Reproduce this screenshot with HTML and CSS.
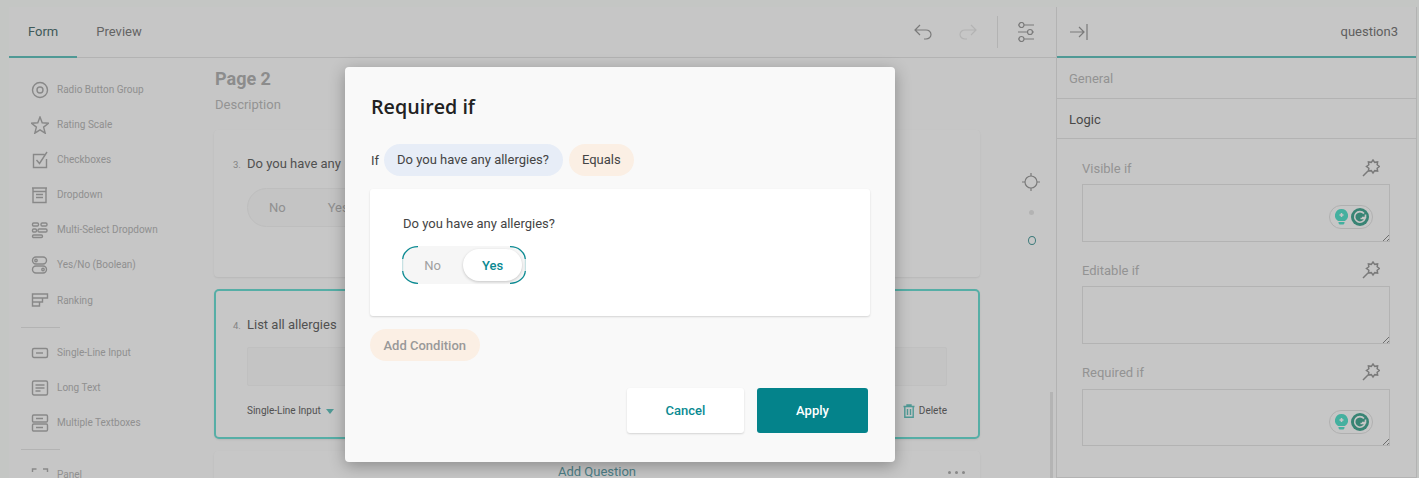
FILE: index.html
```html
<!DOCTYPE html>
<html lang="en">
<head>
    <meta charset="UTF-8">
    <meta name="viewport" content="width=device-width, initial-scale=1.0">
    <title>Form Builder</title>
    <link rel="stylesheet" href="styles.css">
</head>
<body>
    <div class="app">
        <div class="builder">
            <div class="topbar">
                <div class="tab active">Form</div>
                <div class="tab">Preview</div>
                <div class="tools">
                    <svg class="tool" width="20" height="18" viewBox="0 0 20 18"><path d="M7 2 2 7l5 5M2 7h11a5 4.500 0 0 1 0 9h-2"/></svg>
                    <svg class="tool faint" width="20" height="18" viewBox="0 0 20 18"><path d="M13 2l5 5-5 5M18 7H7a5 4.500 0 0 0 0 9h2"/></svg>
                    <span class="tool-sep"></span>
                    <svg class="tool" width="18" height="20" viewBox="0 0 18 20"><path d="M7 3h10M1 3h1M1 10h10M15 10h2M7 17h10M1 17h1"/><circle cx="4.500" cy="3" r="2.500"/><circle cx="13" cy="10" r="2.500"/><circle cx="4.500" cy="17" r="2.500"/></svg>
                </div>
            </div>
            <div class="workspace">
                <div class="toolbox">
                    <div class="tool-item"><svg width="18" height="18" viewBox="0 0 18 18"><circle cx="9" cy="9" r="7.500"/><circle cx="9" cy="9" r="3"/></svg>Radio Button Group</div>
                    <div class="tool-item"><svg width="18" height="18" viewBox="0 0 18 18"><path d="M9 1l2.200 5.800 6.300.4-4.900 3.900 1.600 6.100L9 13.800l-5.200 3.400 1.600-6.100L.500 7.200l6.300-.4z"/></svg>Rating Scale</div>
                    <div class="tool-item"><svg width="18" height="18" viewBox="0 0 18 18"><path d="M15.500 8v8.500h-13v-13h11M5.500 9l3 3.500L16 1"/></svg>Checkboxes</div>
                    <div class="tool-item"><svg width="18" height="18" viewBox="0 0 18 18"><path d="M1 2h15M2 2v14.500h13V2M1.500 5.500h14M5 8.500h7M5 11.500h7"/></svg>Dropdown</div>
                    <div class="tool-item"><svg width="18" height="18" viewBox="0 0 18 18"><rect x="1.500" y="2" width="6" height="3" rx="1.200"/><rect x="10" y="2" width="6" height="3" rx="1.200"/><rect x="1.500" y="8" width="4" height="3" rx="1.200"/><rect x="7" y="8" width="9" height="3" rx="1.200"/><rect x="1.500" y="14" width="10" height="2.500" rx="1.200"/></svg>Multi-Select Dropdown</div>
                    <div class="tool-item"><svg width="18" height="18" viewBox="0 0 18 18"><rect x="1.500" y="1" width="14" height="7" rx="3.500"/><rect x="1.500" y="10" width="14" height="7" rx="3.500"/><circle cx="5" cy="4.500" r="1.200"/><circle cx="12" cy="13.500" r="1.200"/></svg>Yes/No (Boolean)</div>
                    <div class="tool-item ranking"><svg width="18" height="18" viewBox="0 0 18 18"><path d="M1.500 2h15v4h-15zM1.500 6h10v4h-10zM1.500 10h7v4h-7z"/></svg>Ranking</div>
                    <div class="tool-sep-line"></div>
                    <div class="tool-item"><svg width="18" height="18" viewBox="0 0 18 18"><rect x="1.500" y="4.500" width="15" height="9" rx="1.500"/><path d="M5 9h7"/></svg>Single-Line Input</div>
                    <div class="tool-item"><svg width="18" height="18" viewBox="0 0 18 18"><rect x="1.500" y="2" width="15" height="14" rx="1.500"/><path d="M4.500 6h9M4.500 9h9M4.500 12h5"/></svg>Long Text</div>
                    <div class="tool-item"><svg width="18" height="18" viewBox="0 0 18 18"><rect x="1.500" y="1" width="15" height="7" rx="1.200"/><rect x="1.500" y="10" width="15" height="7" rx="1.200"/><path d="M5 4.500h7M5 13.500h7"/></svg>Multiple Textboxes</div>
                    <div class="tool-sep-line"></div>
                    <div class="tool-item"><svg width="18" height="18" viewBox="0 0 18 18"><path d="M1.500 6V3h4M12 3h4.500v3M1.500 12v3h4M12 15h4.500v-3"/></svg>Panel</div>
                </div>
                <div class="canvas">
                    <div class="page-title">Page 2</div>
                    <div class="page-desc">Description</div>
                    <div class="card card-q3">
                        <div class="q-title"><span class="q-num">3.</span>Do you have any</div>
                        <div class="bool"><span>No</span><span>Yes</span></div>
                    </div>
                    <div class="card card-q4">
                        <div class="q-title"><span class="q-num">4.</span>List all allergies</div>
                        <div class="q-input"></div>
                        <div class="q-foot">
                            <span>Single-Line Input</span><span class="caret"></span>
                            <span class="q-delete">
                                <svg width="12" height="14" viewBox="0 0 12 14"><path d="M.500 2.500h11M4 2.500V1h4v1.500M1.800 2.500v10.800h8.400V2.500M4.500 5v6M7.500 5v6"/></svg>Delete
                            </span>
                        </div>
                    </div>
                    <div class="card card-add">
                        <span class="add-question">Add Question</span>
                        <span class="more"><i></i><i></i><i></i></span>
                    </div>
                </div>
                <div class="rail">
                    <svg class="rail-target" width="18" height="18" viewBox="0 0 18 18"><circle cx="9" cy="9" r="6"/><path d="M9 0v3M9 15v3M0 9h3M15 9h3"/></svg>
                    <span class="rail-dot"></span>
                    <span class="rail-ring"></span>
                    <span class="scroll-thumb"></span>
                </div>
            </div>
        </div>
        <div class="props">
            <div class="props-head">
                <svg class="tool" width="18" height="20" viewBox="0 0 18 20"><path d="M0 10h14M9 5l5 5-5 5M17 2v16"/></svg>
                <span>question3</span>
            </div>
            <div class="props-row">General</div>
            <div class="props-row current">Logic</div>
            <div class="props-body">
                <div class="field-head"><span>Visible if</span><svg class="wand" width="18" height="18" viewBox="0 0 18 18"><path d="M1 17l5-5M17.500 7.500l-2.340 1.720.44 2.880-2.880-.44L11 14l-1.720-2.340-2.880.44.44-2.880L4.500 7.500l2.340-1.720-.44-2.880 2.880.44L11 1l1.720 2.340 2.880-.44-.44 2.880z"/></svg></div>
                <div class="field-box">
                    <div class="grammarly"><svg width="13" height="16" viewBox="0 0 13 16"><path class="bulb" d="M6.500 0a6.500 6.500 0 0 1 3.500 12H3A6.500 6.500 0 0 1 6.500 0zM3.500 13h6v1.200l-1 1.300h-4l-1-1.300z"/><path class="bulb-plus" d="M6.500 4v4M4.500 6h4"/></svg><svg class="g-badge" width="18" height="18" viewBox="0 0 18 18"><circle class="g-disc" cx="9" cy="9" r="9"/><path class="g-arc" d="M13 5.500A5.300 5.300 0 1 0 14 10.500H9.500M11 9.500h3.500v-3"/></svg></div>
                    <span class="grip"></span>
                </div>
                <div class="field-head"><span>Editable if</span><svg class="wand" width="18" height="18" viewBox="0 0 18 18"><path d="M1 17l5-5M17.500 7.500l-2.340 1.720.44 2.880-2.880-.44L11 14l-1.720-2.340-2.880.44.44-2.880L4.500 7.500l2.340-1.720-.44-2.880 2.880.44L11 1l1.720 2.340 2.880-.44-.44 2.880z"/></svg></div>
                <div class="field-box"><span class="grip"></span></div>
                <div class="field-head last"><span>Required if</span><svg class="wand" width="18" height="18" viewBox="0 0 18 18"><path d="M1 17l5-5M17.500 7.500l-2.340 1.720.44 2.880-2.880-.44L11 14l-1.720-2.340-2.880.44.44-2.880L4.500 7.500l2.340-1.720-.44-2.880 2.880.44L11 1l1.720 2.340 2.880-.44-.44 2.880z"/></svg></div>
                <div class="field-box">
                    <div class="grammarly"><svg width="13" height="16" viewBox="0 0 13 16"><path class="bulb" d="M6.500 0a6.500 6.500 0 0 1 3.500 12H3A6.500 6.500 0 0 1 6.500 0zM3.500 13h6v1.200l-1 1.300h-4l-1-1.300z"/><path class="bulb-plus" d="M6.500 4v4M4.500 6h4"/></svg><svg class="g-badge" width="18" height="18" viewBox="0 0 18 18"><circle class="g-disc" cx="9" cy="9" r="9"/><path class="g-arc" d="M13 5.500A5.300 5.300 0 1 0 14 10.500H9.500M11 9.500h3.500v-3"/></svg></div>
                    <span class="grip"></span>
                </div>
            </div>
        </div>
    </div>

    <!-- Dialog over the dimmed builder -->
    <div class="overlay">
        <div class="modal">
            <h2>Required if</h2>
            <div class="rule">
                <span class="rule-if">If</span>
                <span class="pill pill-blue">Do you have any allergies?</span>
                <span class="pill pill-peach">Equals</span>
            </div>
            <div class="value-card">
                <div class="value-title">Do you have any allergies?</div>
                <div class="value-toggle">
                    <svg class="toggle-arcs" width="124" height="38" viewBox="0 0 124 38"><path class="arc-side" d="M.700 13v12M123.300 13v12"/><path d="M16 .700A15 13 0 0 0 .700 13M.700 25A15 13 0 0 0 16 37.300M108 .700A15 13 0 0 1 123.300 13M123.300 25A15 13 0 0 1 108 37.300"/></svg>
                    <span class="opt">No</span>
                    <span class="opt on">Yes</span>
                </div>
            </div>
            <div class="add-cond"><span class="pill pill-peach muted">Add Condition</span></div>
            <div class="modal-foot">
                <button class="btn btn-cancel">Cancel</button>
                <button class="btn btn-apply">Apply</button>
            </div>
        </div>
    </div>
</body>
</html>
```

FILE: styles.css
```css
* {
    box-sizing: border-box;
}

html, body {
    height: 100%;
}

body {
    margin: 0;
    overflow: hidden;
    background-color: #f5f8f6;
    font-family: 'Roboto', 'Liberation Sans', sans-serif;
    color: #333;
    padding: 7px 2px 0 9px;
}

svg {
    fill: none;
    stroke: #777;
    stroke-width: 1.200;
    flex-shrink: 0;
}

.app {
    display: flex;
    height: 471px;
    background-color: #f8f8f8;
}

.builder {
    width: 1047px;
    display: flex;
    flex-direction: column;
    flex-shrink: 0;
}

/* top tabs */
.topbar {
    height: 51px;
    display: flex;
    border-bottom: 1px solid #e0e0e0;
    flex-shrink: 0;
}

.tab {
    padding: 0 19px;
    height: 51px;
    line-height: 50px;
    font-size: 13px;
    color: #7d7d7d;
}

.tab.active {
    color: #4f7070;
    border-bottom: 2px solid #63c0bb;
}

.tools {
    margin-left: auto;
    display: flex;
    align-items: center;
    padding-right: 21px;
}

.tool {
    stroke: #999;
}

.tool.faint {
    stroke: #e0e0e0;
    margin-left: 25px;
}

.tool-sep {
    width: 1px;
    height: 32px;
    background-color: #e0e0e0;
    margin: 0 19px;
}

.workspace {
    flex: 1;
    display: flex;
    min-height: 0;
}

/* left toolbox */
.toolbox {
    width: 205px;
    flex-shrink: 0;
    padding: 14px 0 0 12px;
}

.tool-item {
    height: 35px;
    display: flex;
    align-items: center;
    gap: 8px;
    font-size: 10px;
    color: #b4b4b4;
    padding-left: 10px;
}

.tool-item svg {
    stroke: #aaa;
    stroke-width: 1.400;
}

.tool-item.ranking {
    margin-top: 1px;
}

.tool-sep-line {
    width: 39px;
    height: 1px;
    background-color: #e0e0e0;
    margin: 9px 0 7px;
}

/* canvas */
.canvas {
    width: 766px;
    flex-shrink: 0;
}

.page-title {
    font-size: 18px;
    font-weight: 700;
    color: #b0b0b0;
    line-height: 21px;
    margin: 10px 0 0 1px;
}

.page-desc {
    font-size: 13px;
    color: #b8b8b8;
    line-height: 16px;
    margin: 8px 0 17px 1px;
}

.card {
    background-color: #f9f9f9;
    border-radius: 4px;
    box-shadow: 0 1px 2px rgba(0, 0, 0, 0.08);
}

.card-q3 {
    height: 147px;
    padding: 26px 19px 0;
    margin-bottom: 12px;
}

.q-title {
    font-size: 13px;
    color: #666;
    line-height: 16px;
    display: flex;
    align-items: baseline;
    white-space: nowrap;
}

.q-num {
    font-size: 9.500px;
    color: #a5a5a5;
    width: 14px;
    flex-shrink: 0;
}

.bool {
    margin: 15px 0 0 14px;
    width: 150px;
    height: 39px;
    border-radius: 20px;
    background-color: #f5f5f5;
    border: 1px solid #eee;
    display: flex;
    align-items: center;
    gap: 42px;
    padding-left: 21px;
    font-size: 13px;
    color: #b4b4b4;
}

.card-q4 {
    height: 150px;
    border: 2px solid #6cdad0;
    border-radius: 5px;
    padding: 26px 17px 0;
    margin-bottom: 12px;
}

.q-input {
    margin: 13px 14px 0;
    height: 39px;
    background-color: #f5f5f5;
    border: 1px solid #f0f0f0;
    border-radius: 2px;
}

.q-foot {
    margin: 18px 14px 0;
    display: flex;
    align-items: center;
    font-size: 10px;
    color: #666;
    line-height: 14px;
}

.caret {
    width: 0;
    height: 0;
    border: 4px solid transparent;
    border-top: 5px solid #63c0bb;
    border-bottom: 0;
    margin-left: 5px;
}

.q-delete {
    margin-left: auto;
    display: flex;
    align-items: center;
    gap: 4px;
}

.q-delete svg {
    stroke: #63c0bb;
    stroke-width: 1.400;
}

.card-add {
    height: 40px;
    position: relative;
    padding-top: 13px;
    text-align: center;
    font-size: 13px;
    color: #5f9ea8;
    line-height: 16px;
}

.more {
    position: absolute;
    top: 20px;
    right: 15px;
    display: flex;
    gap: 4px;
}

.more i {
    width: 3px;
    height: 3px;
    border-radius: 50%;
    background-color: #aaa;
}

/* right rail */
.rail {
    flex: 1;
    position: relative;
    display: flex;
    flex-direction: column;
    align-items: center;
    padding: 115px 0 0 26px;
}

.rail-target {
    stroke: #999;
}

.rail-dot {
    width: 5px;
    height: 5px;
    border-radius: 50%;
    background-color: #e0e0e0;
    margin-top: 19px;
}

.rail-ring {
    width: 8px;
    height: 9px;
    border-radius: 50%;
    border: 1px solid #4e9a9a;
    margin-top: 21px;
    margin-left: 1px;
}

.scroll-thumb {
    position: absolute;
    left: 70px;
    top: 334px;
    bottom: 0;
    width: 3px;
    background-color: #e2e2e2;
}

/* right properties panel */
.props {
    flex: 1;
    min-width: 0;
    border-left: 1px solid #e0e0e0;
    border-right: 1px solid #e0e0e0;
    border-bottom: 1px solid #e0e0e0;
    font-size: 13px;
}

.props-head {
    height: 51px;
    display: flex;
    align-items: center;
    justify-content: space-between;
    padding: 0 18px 0 13px;
    border-bottom: 2px solid #63c0bb;
    color: #777;
}

.props-row {
    height: 41px;
    line-height: 41px;
    padding-left: 12px;
    border-bottom: 1px solid #e0e0e0;
    color: #b8b8b8;
}

.props-row.current {
    color: #5a5a5a;
    height: 40px;
}

.props-body {
    padding: 20px 26px 0 25px;
}

.field-head {
    display: flex;
    justify-content: space-between;
    align-items: center;
    height: 18px;
    margin-bottom: 7px;
    color: #b8b8b8;
    padding-right: 10px;
}

.field-head.last {
    margin-bottom: 8px;
}

.wand {
    stroke: #999;
    stroke-width: 1.500;
}

.field-box {
    height: 58px;
    border: 1px solid #e0e0e0;
    margin-bottom: 19px;
    position: relative;
}

.field-box:last-child {
    height: 57px;
    margin-bottom: 0;
}

.grip {
    position: absolute;
    right: 0;
    bottom: 0;
    width: 9px;
    height: 9px;
    background: repeating-linear-gradient(135deg, transparent 0, transparent 2px, #8a8a8a 2px, #8a8a8a 3px);
    clip-path: polygon(100% 0, 100% 100%, 0 100%);
}

.grammarly {
    position: absolute;
    right: 16px;
    top: 20px;
    width: 44px;
    height: 24px;
    border-radius: 12px;
    border: 1px solid #ddd;
    display: flex;
    align-items: center;
    gap: 3px;
    padding-left: 5px;
}

.grammarly svg {
    stroke: none;
}

.bulb {
    fill: #56dcc7;
    stroke: none;
}

.bulb-plus {
    stroke: #f8f8f8;
    stroke-width: 1.500;
}

.g-disc {
    fill: #47a592;
    stroke: none;
}

.g-arc {
    stroke: #f8f8f8;
    stroke-width: 1.600;
}

/* dialog */
.overlay {
    position: absolute;
    inset: 0;
    background-color: rgba(0, 0, 0, 0.2);
    padding: 67px 0 0 345px;
}

.modal {
    width: 550px;
    height: 395px;
    background-color: #f9f9f9;
    border-radius: 4px;
    box-shadow: 0 4px 16px rgba(0, 0, 0, 0.3);
    padding: 26px 25px 0;
}

.modal h2 {
    margin: 0 0 0 1px;
    font-family: 'Open Sans', sans-serif;
    font-size: 19.700px;
    font-weight: 600;
    line-height: 27px;
    color: #222;
}

.rule {
    display: flex;
    align-items: center;
    margin-top: 24px;
    font-size: 13px;
    color: #444;
}

.rule-if {
    margin-left: 1px;
    width: 13px;
}

.pill {
    height: 32px;
    line-height: 32px;
    padding: 0 13px;
    border-radius: 16px;
    font-size: 13px;
    color: #444;
}

.pill-blue {
    background-color: #e7edf7;
    padding-right: 14px;
}

.pill-peach {
    background-color: #fbefe4;
    margin-left: 6px;
}

.pill.muted {
    display: inline-block;
    margin-left: 0;
    padding: 0 13.500px;
    line-height: 33px;
    color: #999;
    font-weight: 500;
}

.value-card {
    height: 127px;
    background-color: #fff;
    border-radius: 3px;
    box-shadow: 0 1px 2px rgba(0, 0, 0, 0.15);
    margin-top: 13px;
    padding: 27px 33px 0;
}

.value-title {
    font-size: 13px;
    line-height: 16px;
    color: #444;
}

.value-toggle {
    position: relative;
    width: 124px;
    height: 38px;
    margin: 14px 0 0 -1px;
    border-radius: 14px;
    background-color: #f6f6f6;
    display: flex;
    align-items: center;
    font-size: 13px;
    color: #a0a0a0;
}

.toggle-arcs {
    position: absolute;
    left: 0;
    top: 0;
    stroke: #0a8a92;
    stroke-width: 1.300;
}

.toggle-arcs .arc-side {
    stroke: #bcdcde;
    stroke-width: 1;
}

.opt {
    width: 61px;
    text-align: center;
    position: relative;
}

.opt.on {
    width: 59px;
    height: 32px;
    line-height: 33px;
    border-radius: 16px;
    background-color: #fff;
    box-shadow: 0 1px 3px rgba(0, 0, 0, 0.2);
    color: #0a8a92;
    font-weight: 500;
}

.add-cond {
    margin-top: 13px;
    height: 32px;
}

.modal-foot {
    display: flex;
    justify-content: flex-end;
    gap: 13px;
    margin: 27px 2px 0 0;
}

.btn {
    height: 45px;
    border: 0;
    border-radius: 3px;
    font-family: 'Roboto', sans-serif;
    font-size: 13px;
    font-weight: 500;
}

.btn-cancel {
    width: 117px;
    background-color: #fff;
    color: #0a8a92;
    box-shadow: 0 1px 2px rgba(0, 0, 0, 0.15);
}

.btn-apply {
    width: 111px;
    background-color: #04838b;
    color: #fff;
}
```
